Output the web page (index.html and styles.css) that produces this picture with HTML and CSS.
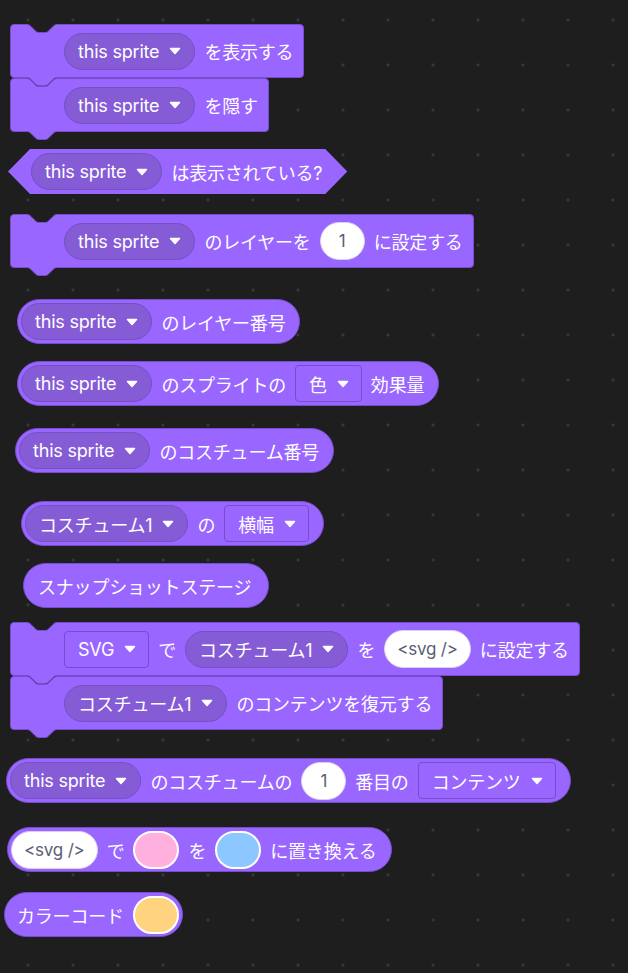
FILE: index.html
```html
<!DOCTYPE html>
<html lang="ja">
  <head>
    <meta charset="UTF-8" />
    <meta name="viewport" content="width=device-width, initial-scale=1.0" />
    <title>Looks Blocks</title>
    <link rel="stylesheet" href="styles.css">
  </head>
  <body>
    <div class="workspace">

      <div class="script pos-1">
        <div class="stack">
          <span class="menu">this sprite <svg class="arrow" viewBox="0 0 12 8"><path d="M1.5 1.5h9l-4.5 5z"/></svg></span>
          <span>を表示する</span>
        </div>
        <div class="stack">
          <span class="menu">this sprite <svg class="arrow" viewBox="0 0 12 8"><path d="M1.5 1.5h9l-4.5 5z"/></svg></span>
          <span>を隠す</span>
        </div>
      </div>

      <div class="bool pos-2">
        <span class="menu">this sprite <svg class="arrow" viewBox="0 0 12 8"><path d="M1.5 1.5h9l-4.5 5z"/></svg></span>
        <span>は表示されている?</span>
      </div>

      <div class="script pos-3">
        <div class="stack">
          <span class="menu">this sprite <svg class="arrow" viewBox="0 0 12 8"><path d="M1.5 1.5h9l-4.5 5z"/></svg></span>
          <span>のレイヤーを</span>
          <span class="input">1</span>
          <span>に設定する</span>
        </div>
      </div>

      <div class="reporter pos-4">
        <span class="menu">this sprite <svg class="arrow" viewBox="0 0 12 8"><path d="M1.5 1.5h9l-4.5 5z"/></svg></span>
        <span>のレイヤー番号</span>
      </div>

      <div class="reporter pos-5">
        <span class="menu">this sprite <svg class="arrow" viewBox="0 0 12 8"><path d="M1.5 1.5h9l-4.5 5z"/></svg></span>
        <span>のスプライトの</span>
        <span class="menu square">色 <svg class="arrow" viewBox="0 0 12 8"><path d="M1.5 1.5h9l-4.5 5z"/></svg></span>
        <span>効果量</span>
      </div>

      <div class="reporter pos-6">
        <span class="menu">this sprite <svg class="arrow" viewBox="0 0 12 8"><path d="M1.5 1.5h9l-4.5 5z"/></svg></span>
        <span>のコスチューム番号</span>
      </div>

      <div class="reporter pos-7">
        <span class="menu">コスチューム1 <svg class="arrow" viewBox="0 0 12 8"><path d="M1.5 1.5h9l-4.5 5z"/></svg></span>
        <span>の</span>
        <span class="menu square">横幅 <svg class="arrow" viewBox="0 0 12 8"><path d="M1.5 1.5h9l-4.5 5z"/></svg></span>
      </div>

      <div class="reporter text-only pos-8">
        <span>スナップショットステージ</span>
      </div>

      <div class="script pos-9">
        <div class="stack">
          <span class="menu square">SVG <svg class="arrow" viewBox="0 0 12 8"><path d="M1.5 1.5h9l-4.5 5z"/></svg></span>
          <span>で</span>
          <span class="menu">コスチューム1 <svg class="arrow" viewBox="0 0 12 8"><path d="M1.5 1.5h9l-4.5 5z"/></svg></span>
          <span>を</span>
          <span class="input">&lt;svg /&gt;</span>
          <span>に設定する</span>
        </div>
        <div class="stack">
          <span class="menu">コスチューム1 <svg class="arrow" viewBox="0 0 12 8"><path d="M1.5 1.5h9l-4.5 5z"/></svg></span>
          <span>のコンテンツを復元する</span>
        </div>
      </div>

      <div class="reporter pos-10">
        <span class="menu">this sprite <svg class="arrow" viewBox="0 0 12 8"><path d="M1.5 1.5h9l-4.5 5z"/></svg></span>
        <span>のコスチュームの</span>
        <span class="input">1</span>
        <span>番目の</span>
        <span class="menu square">コンテンツ <svg class="arrow" viewBox="0 0 12 8"><path d="M1.5 1.5h9l-4.5 5z"/></svg></span>
      </div>

      <div class="reporter pos-11">
        <span class="input">&lt;svg /&gt;</span>
        <span>で</span>
        <span class="swatch pink"></span>
        <span>を</span>
        <span class="swatch blue"></span>
        <span>に置き換える</span>
      </div>

      <div class="reporter color-row pos-12">
        <span>カラーコード</span>
        <span class="swatch yellow"></span>
      </div>

    </div>
  </body>
</html>
```

FILE: styles.css
```css
body {
  margin: 0;
  min-height: 100vh;
  background-color: #1e1e1e;
  background-image: radial-gradient(circle, #3d3d3d 1px, transparent 1.6px);
  background-size: 45px 45px;
  background-position: 5.5px -2.5px;
  font-family: Inter, "Noto Sans CJK JP", sans-serif;
  font-size: 18px;
  letter-spacing: -0.2px;
  color: white;
}

.workspace {
  display: flex;
  flex-direction: column;
  align-items: flex-start;
  padding-top: 24px;
}

/* where each script sits on the canvas */
.pos-1 { margin-left: 10px; }
.pos-2 { margin-left: 8px; margin-top: 17px; }
.pos-3 { margin-left: 10px; margin-top: 20px; }
.pos-4 { margin-left: 17px; margin-top: 31px; }
.pos-5 { margin-left: 17px; margin-top: 17px; }
.pos-6 { margin-left: 15px; margin-top: 22px; }
.pos-7 { margin-left: 21px; margin-top: 28px; }
.pos-8 { margin-left: 23px; margin-top: 17px; }
.pos-9 { margin-left: 10px; margin-top: 14px; }
.pos-10 { margin-left: 6px; margin-top: 28px; }
.pos-11 { margin-left: 7px; margin-top: 24px; }
.pos-12 { margin-left: 4px; margin-top: 20px; }

.script {
  display: flex;
  flex-direction: column;
  align-items: flex-start;
}

.stack,
.reporter,
.bool {
  display: flex;
  align-items: center;
  gap: 9px;
  box-sizing: border-box;
  background: #9966ff;
  white-space: nowrap;
}

.stack {
  position: relative;
  height: 54px;
  padding: 0 10px 0 53px;
  border: 1px solid #774dcb;
  border-radius: 4px;
}

/* notch cut into the top of a stack block */
.stack::before {
  content: "";
  position: absolute;
  top: -1px;
  left: 16px;
  width: 30px;
  height: 10px;
  z-index: 1;
  background: url("data:image/svg+xml,%3Csvg xmlns='http://www.w3.org/2000/svg' viewBox='0 0 30 10'%3E%3Cpath d='M0 0.5C2 0.5 3 1.5 4 2.5L8 6.5C9 7.5 10 8.5 12 8.5H18C20 8.5 21 7.5 22 6.5L26 2.5C27 1.5 28 0.5 30 0.5V0H0Z' fill='%231e1e1e'/%3E%3Cpath d='M0 0.5C2 0.5 3 1.5 4 2.5L8 6.5C9 7.5 10 8.5 12 8.5H18C20 8.5 21 7.5 22 6.5L26 2.5C27 1.5 28 0.5 30 0.5' fill='none' stroke='%23774dcb'/%3E%3C/svg%3E") no-repeat;
}

/* tab hanging off the bottom */
.stack::after {
  content: "";
  position: absolute;
  top: 100%;
  left: 16px;
  width: 30px;
  height: 10px;
  z-index: 2;
  background: url("data:image/svg+xml,%3Csvg xmlns='http://www.w3.org/2000/svg' viewBox='0 0 30 10'%3E%3Cpath d='M0 0.5C2 0.5 3 1.5 4 2.5L8 6.5C9 7.5 10 8.5 12 8.5H18C20 8.5 21 7.5 22 6.5L26 2.5C27 1.5 28 0.5 30 0.5V-1H0Z' fill='%239966ff' stroke='%23774dcb'/%3E%3C/svg%3E") no-repeat;
}

.reporter {
  height: 45px;
  padding: 0 14px 0 3px;
  border: 1px solid #774dcb;
  border-radius: 23px;
}

.reporter.text-only {
  padding: 0 17px 0 14px;
}

.reporter.color-row {
  padding: 0 3px 0 12px;
}

.bool {
  height: 45px;
  padding: 0 25px 0 23px;
  clip-path: polygon(22px 0, calc(100% - 22px) 0, 100% 50%, calc(100% - 22px) 100%, 22px 100%, 0 50%);
}

.menu {
  display: inline-flex;
  align-items: center;
  gap: 10px;
  box-sizing: border-box;
  height: 37px;
  padding: 0 13px;
  background: #855cd6;
  border: 1px solid #7450c4;
  border-radius: 19px;
}

.menu.square {
  background: #9966ff;
  border-color: #774dcb;
  border-radius: 4px;
  padding: 0 12px 0 13px;
}

.arrow {
  width: 12px;
  height: 8px;
  fill: white;
  stroke: white;
  stroke-width: 1.5;
  stroke-linejoin: round;
}

.input {
  display: inline-flex;
  align-items: center;
  justify-content: center;
  box-sizing: border-box;
  height: 38px;
  min-width: 45px;
  padding: 0 12px;
  background: white;
  border: 1px solid #d9d0ee;
  border-radius: 19px;
  color: #575e75;
  font-size: 17px;
}

.swatch {
  box-sizing: border-box;
  width: 46px;
  height: 38px;
  border: 2px solid white;
  border-radius: 19px;
}

.pink { background: #ffb0df; }
.blue { background: #8cc8ff; }
.yellow { background: #ffd37f; }
```
